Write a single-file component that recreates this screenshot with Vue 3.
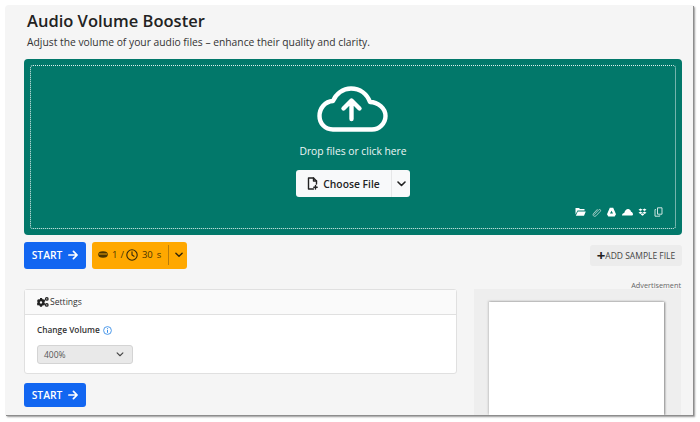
<script setup>
const sources = ['folder', 'link', 'drive', 'cloud', 'dropbox', 'copy']
</script>

<template>
  <div class="page">
    <div class="panel">
      <h1 class="title">Audio Volume Booster</h1>
      <p class="desc">Adjust the volume of your audio files – enhance their quality and clarity.</p>

      <div class="drop">
        <div class="drop-inner">
          <svg class="cloud" viewBox="0 0 72 46" fill="none" stroke="#fff" stroke-width="4.4" stroke-linecap="round" stroke-linejoin="round">
            <path d="M16 43.500C8 43.500 2.500 37.500 2.500 30 2.500 22 8 15.500 16 15 19 7.500 26 2.500 34 2.500 43 2.500 50 8 53 16 61 16 68.500 22.500 68.500 30 68.500 37.500 62 43.500 55 43.500z" />
            <path d="M34.500 33V15M26.500 22.500l8-8 8 8" />
          </svg>
          <div class="drop-text">Drop files or click here</div>
          <div class="choose">
            <button class="choose-main">
              <svg width="11" height="13" viewBox="0 0 11 13" fill="none" stroke="#222" stroke-width="1.400" stroke-linejoin="round" stroke-linecap="round">
                <path d="M6.500 12H1.500V1H6.500L9.500 4V7" />
                <path d="M6.500 1V4H9.500M8.500 8.500V12M6.800 10.200H10.200" />
              </svg>
              Choose File
            </button>
            <button class="choose-arrow">
              <svg width="9" height="6" viewBox="0 0 9 6" fill="none" stroke="#222" stroke-width="1.600" stroke-linecap="round" stroke-linejoin="round"><path d="M1 1l3.500 3.500L8 1" /></svg>
            </button>
          </div>
          <div class="sources">
            <svg v-for="s in sources" :key="s" width="11" height="10" viewBox="0 0 11 10" fill="#fff">
              <path v-if="s === 'folder'" d="M.5 1h3.500l1 1h4.500v1.500H2.500L.5 7.500zM2.800 4.500H10.800L9 8.800H.8z" />
              <path v-else-if="s === 'link'" d="M3 7.800l4.800-5c1-1 2.500.4 1.500 1.500L5 8.800c-1.800 1.500-3.800-.5-2.500-2.300L6.500 2.200" fill="none" stroke="#cfe4e0" stroke-width=".8" />
              <path v-else-if="s === 'drive'" fill-rule="evenodd" d="M3.800.8h3.400L10 7.200 8.700 9.500H2.300L1 7.200zM5.500 3.700L4 6.500h3z" />
              <path v-else-if="s === 'cloud'" d="M0 8.500c0-1.500 1-2.500 2.200-2.600C3 3 5 1.500 6.500 2c1.500.4 2.300 1.500 2.500 2.800 1.200.2 2 1.500 2 2.500 0 .6-.3 1.200-.8 1.200z" />
              <path v-else-if="s === 'dropbox'" d="M3.500 1.500L5.500 2.800 3.500 4.100 1.500 2.800zM7.500 1.500L9.500 2.800 7.500 4.100 5.500 2.800zM3.500 4.400L5.500 5.700 3.500 7 1.500 5.700zM7.500 4.400L9.500 5.700 7.500 7 5.500 5.700zM5.500 6.300L7.300 7.500 5.500 8.700 3.700 7.500z" />
              <path v-else d="M4.500.8H9v6.400H4.500zM2.800 2.500H2V9.200H6.800V8.400" fill="none" stroke="#e3f0ee" stroke-width=".9" />
            </svg>
          </div>
        </div>
      </div>

      <div class="actions">
        <button class="start start-top">
          START
          <svg width="10" height="10" viewBox="0 0 11 10" fill="none" stroke="#fff" stroke-width="1.900" stroke-linecap="round" stroke-linejoin="round"><path d="M1 5h8.500M6 1l4 4-4 4" /></svg>
        </button>
        <div class="quota">
          <svg width="10" height="7" viewBox="0 0 10 7" fill="#4a3500"><ellipse cx="5" cy="3.500" rx="4.800" ry="3.300" /><path d="M1 3h8" stroke="#ffa800" stroke-width=".9" /></svg>
          <span>1</span>
          <span class="slash">/</span>
          <svg width="12" height="12" viewBox="0 0 12 12" fill="none" stroke="#33270a" stroke-width="1.100" stroke-linecap="round"><circle cx="6" cy="6" r="5.200" /><path d="M6 2.800V6l2 1.300" /></svg>
          <span>30</span>
          <span>s</span>
          <i class="quota-line"></i>
          <svg width="8" height="6" viewBox="0 0 9 6" fill="none" stroke="#33270a" stroke-width="1.600" stroke-linecap="round" stroke-linejoin="round"><path d="M1 1l3.500 3.500L8 1" /></svg>
        </div>
        <button class="sample"><b>+</b>ADD SAMPLE FILE</button>
      </div>

      <div class="columns">
        <div class="left">
          <section class="card">
            <header class="card-head">
              <svg width="12" height="10" viewBox="0 0 12 10" fill="#222">
                <path fill-rule="evenodd" d="M3 1h2l.3 1.100.9.500 1.100-.3 1 1.700-.8.800v1.200l.8.800-1 1.700-1.100-.3-.9.500L5 9.800H3l-.3-1.100-.9-.5-1.100.3-1-1.700.8-.8V4.800L0 4l1-1.700 1.100.3.900-.5zM4 4.200a1.200 1.200 0 1 0 0 2.400 1.200 1.200 0 0 0 0-2.400z" />
                <path fill-rule="evenodd" d="M9.800 0a1.900 1.900 0 1 1 0 3.800 1.900 1.900 0 0 1 0-3.800zm0 1.300a.6.6 0 1 0 0 1.200.6.6 0 0 0 0-1.200zM9.800 6a1.900 1.900 0 1 1 0 3.800 1.900 1.900 0 0 1 0-3.800zm0 1.300a.6.6 0 1 0 0 1.200.6.6 0 0 0 0-1.200z" />
              </svg>
              Settings
            </header>
            <div class="card-body">
              <div class="field-label">
                Change Volume
                <svg width="9" height="9" viewBox="0 0 9 9" fill="none" stroke="#3b8ee8"><circle cx="4.500" cy="4.500" r="3.900" stroke-width=".9" /><path d="M4.500 2.200v.8M4.500 3.800v3" stroke-width="1" /></svg>
              </div>
              <div class="select">
                <span>400%</span>
                <svg width="8" height="5" viewBox="0 0 9 6" fill="none" stroke="#444" stroke-width="1.300" stroke-linecap="round" stroke-linejoin="round"><path d="M1 1l3.500 3.500L8 1" /></svg>
              </div>
            </div>
          </section>
          <button class="start start-low">
            START
            <svg width="10" height="10" viewBox="0 0 11 10" fill="none" stroke="#fff" stroke-width="1.900" stroke-linecap="round" stroke-linejoin="round"><path d="M1 5h8.500M6 1l4 4-4 4" /></svg>
          </button>
        </div>
        <aside class="right">
          <div class="ad-label">Advertisement</div>
          <div class="ad">
            <div class="ad-box"></div>
          </div>
        </aside>
      </div>
    </div>
  </div>
</template>

<style>
html, body { margin: 0; background: #fff; overflow: hidden; }
</style>

<style scoped>
.page {
  width: 700px;
  height: 422px;
  padding: 5px 0 0 5px;
  box-sizing: border-box;
  overflow: hidden;
  font-family: "Open Sans", "Liberation Sans", sans-serif;
  color: #222;
}
.panel {
  width: 688px;
  height: 410px;
  box-sizing: border-box;
  padding: 5px 11px 0 19px;
  background: #f5f5f5;
  border-radius: 4px 0 0 0;
  box-shadow: 1px 1px 0 #8d8d8d, 2px 2px 2px #999;
  overflow: hidden;
}
.title {
  margin: 0 0 0 3px;
  font-size: 16.500px;
  line-height: 22px;
  font-weight: 600;
  color: #222;
}
.desc {
  margin: 1px 0 0 3px;
  font-size: 10.300px;
  line-height: 18px;
  color: #333;
}
.drop {
  margin-top: 8px;
  height: 176px;
  box-sizing: border-box;
  padding: 6px;
  background: #02786a;
  border-radius: 4px;
}
.drop-inner {
  position: relative;
  height: 100%;
  box-sizing: border-box;
  border: 1px dotted #e3f0ee;
  border-radius: 3px;
  display: flex;
  flex-direction: column;
  align-items: center;
  padding-top: 20px;
}
.cloud { width: 72px; height: 46px; }
.drop-text {
  margin-top: 11px;
  font-size: 10.300px;
  line-height: 16px;
  color: #eef6f5;
}
.choose {
  margin-top: 11px;
  display: flex;
  height: 27px;
  background: #f8f9fa;
  border-radius: 3px;
}
.choose button {
  border: 0;
  background: none;
  padding: 0;
  font-family: inherit;
  color: #222;
  display: flex;
  align-items: center;
}
.choose-main {
  width: 96px;
  justify-content: center;
  gap: 5px;
  font-size: 10.300px;
  font-weight: 600;
  border-right: 1px solid #e6e7e8 !important;
}
.choose-arrow { width: 18px; justify-content: center; }
.sources {
  position: absolute;
  right: 11px;
  bottom: 11px;
  display: flex;
  gap: 4.600px;
}
.actions {
  margin-top: 7px;
  display: flex;
  align-items: center;
  gap: 6px;
  height: 27px;
}
.start {
  width: 62px;
  height: 27px;
  border: 0;
  padding: 0;
  border-radius: 3px;
  background: #1266f1;
  color: #fff;
  font-family: inherit;
  font-size: 10.300px;
  font-weight: 600;
  display: flex;
  align-items: center;
  justify-content: center;
  gap: 6px;
}
.start-top { padding-bottom: 2px; }
.quota {
  width: 95px;
  height: 27px;
  box-sizing: border-box;
  padding: 0 0 2px 6px;
  border-radius: 3px;
  background: #ffa800;
  color: #4a3500;
  font-size: 9.500px;
  display: flex;
  align-items: center;
  gap: 4px;
}
.slash { margin: 0 -2px 0 -1px; }
.quota-line {
  width: 1px;
  height: 20px;
  background: #b97c08;
  margin: 0 2px 0 2.500px;
}
.sample {
  margin-left: auto;
  width: 92px;
  height: 21px;
  border: 0;
  padding: 0;
  border-radius: 3px;
  background: #ececec;
  color: #444;
  font-family: inherit;
  font-size: 8.500px;
  display: flex;
  align-items: center;
  justify-content: center;
}
.sample b { font-size: 15px; line-height: 13px; color: #222; margin-right: 0; }
.columns {
  margin-top: 13px;
  display: flex;
  gap: 17px;
}
.left { width: 433px; padding-top: 7px; }
.card {
  height: 85px;
  box-sizing: border-box;
  background: #fff;
  border: 1px solid #e0e0e0;
  border-radius: 3px;
}
.card-head {
  height: 25px;
  box-sizing: border-box;
  padding: 0 0 0 12px;
  background: #fafafa;
  border-bottom: 1px solid #e0e0e0;
  font-size: 8.600px;
  display: flex;
  align-items: center;
  gap: 1px;
  color: #333;
}
.card-body { padding: 8px 12px; }
.field-label {
  font-size: 8.300px;
  font-weight: 600;
  line-height: 14px;
  color: #333;
  display: flex;
  align-items: center;
  gap: 3px;
}
.select {
  margin-top: 8px;
  width: 96px;
  height: 19px;
  box-sizing: border-box;
  padding: 0 8px 0 6px;
  background: #e9e9e9;
  border: 1px solid #d4d4d4;
  border-radius: 3px;
  font-size: 8.500px;
  color: #555;
  display: flex;
  align-items: center;
  justify-content: space-between;
}
.start-low { margin-top: 9px; height: 24px; }
.right { width: 207px; }
.ad-label {
  height: 7px;
  line-height: 7px;
  font-size: 7.300px;
  text-align: right;
  color: #666;
}
.ad {
  height: 126px;
  padding: 13px 2px 0 0;
  box-sizing: border-box;
  background: #eeeeee;
  display: flex;
  justify-content: center;
}
.ad-box {
  width: 175px;
  height: 113px;
  background: #fff;
  box-shadow: 1px 0 2px #888, -1px -1px 2px #ccc;
}
</style>
